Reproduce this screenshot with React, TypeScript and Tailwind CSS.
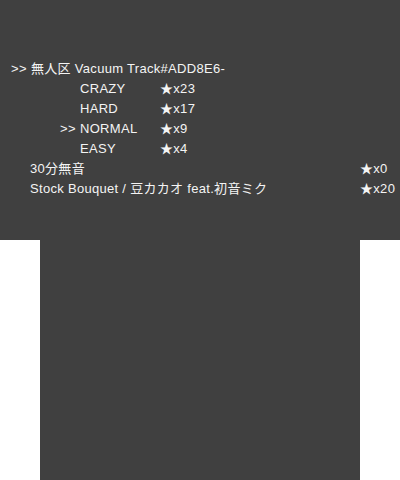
const rows = [
  { name: "CRAZY", stars: 23, current: false },
  { name: "HARD", stars: 17, current: false },
  { name: "NORMAL", stars: 9, current: true },
  { name: "EASY", stars: 4, current: false },
];

const songs = [
  { title: "30分無音", stars: 0 },
  { title: "Stock Bouquet / 豆カカオ feat.初音ミク", stars: 20 },
];

export default function App() {
  return (
    <div
      className="w-[400px] h-[480px] bg-white text-[13px] leading-[20px] tracking-[0.3px] text-[#f4f4f4]"
      style={{ fontFamily: '"Liberation Sans", "Noto Sans CJK JP", sans-serif' }}
    >
      {/* top screen */}
      <div className="h-[240px] bg-[#404040] pt-[59px]">
        <div className="flex pl-[11px]">
          <span className="w-[20px]">&gt;&gt;</span>
          <span>無人区 Vacuum Track#ADD8E6-</span>
        </div>
        {rows.map((r) => (
          <div key={r.name} className="flex pl-[60px]">
            <span className="w-[20px]">{r.current ? ">>" : ""}</span>
            <span className="w-[80px]">{r.name}</span>
            <span>★x{r.stars}</span>
          </div>
        ))}
        {songs.map((s) => (
          <div key={s.title} className="flex pl-[30px]">
            <span className="flex-1 whitespace-nowrap">{s.title}</span>
            <span className="w-[40px]">★x{s.stars}</span>
          </div>
        ))}
      </div>
      {/* bottom screen */}
      <div className="mx-[40px] h-[240px] bg-[#404040]" />
    </div>
  );
}
